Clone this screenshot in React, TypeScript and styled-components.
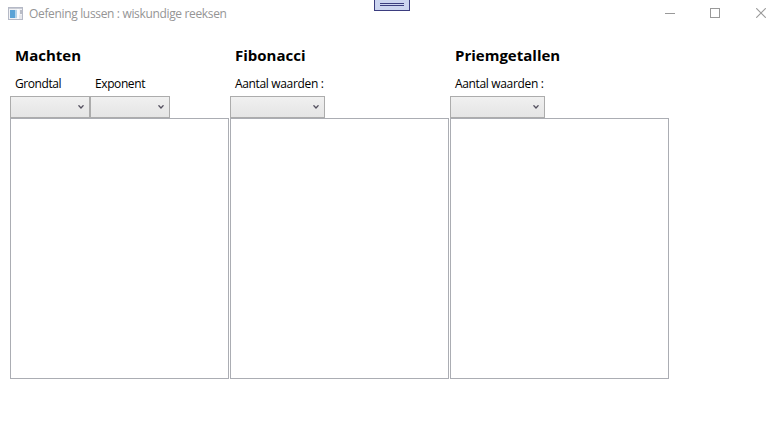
import React from "react";
import styled, { createGlobalStyle } from "styled-components";

const GlobalStyle = createGlobalStyle`
  * { box-sizing: border-box; }
  body {
    margin: 0;
    background: #fff;
    color: #000;
    font-family: "Open Sans", "Noto Sans", sans-serif;
    overflow: hidden;
  }
`;

const Window = styled.div`
  position: relative;
  display: flex;
  flex-direction: column;
  width: 782px;
  height: 437px;
  background: #fff;
`;

const TitleBar = styled.header`
  display: flex;
  align-items: center;
  height: 27px;
  padding-left: 8px;
`;

const AppIcon = styled.svg`
  display: block;
  flex: none;
  margin: 0 6px 1px 0;
`;

const Title = styled.span`
  flex: 1;
  font-size: 12px;
  line-height: 16px;
  letter-spacing: -0.34px;
  color: #959595;
  white-space: nowrap;
`;

const CaptionButton = styled.button<{ $width: number }>`
  display: flex;
  align-items: center;
  justify-content: flex-end;
  width: ${(p) => p.$width}px;
  height: 26px;
  padding: 0;
  border: 0;
  background: none;
`;

const Captions = styled.div`
  display: flex;
  height: 27px;
  padding-right: 16px;
`;

const DebugHandle = styled.div`
  position: absolute;
  top: 0;
  left: 374px;
  display: flex;
  flex-direction: column;
  align-items: center;
  gap: 1px;
  width: 36px;
  height: 11px;
  padding-top: 3px;
  border: 1px solid #3b3d7f;
  border-top: 0;
  background: #ccd5f0;
`;

const Grip = styled.span`
  width: 24px;
  height: 1px;
  background: #3b3d7f;
`;

const Content = styled.main`
  display: flex;
  gap: 1px;
  padding: 18px 0 0 10px;
`;

const Panel = styled.section`
  width: 219px;
`;

const Heading = styled.h2`
  height: 29px;
  margin: 0;
  padding-left: 5px;
  font-size: 15px;
  font-weight: 700;
  line-height: 21px;
`;

const Fields = styled.div`
  display: flex;
`;

const Field = styled.div<{ $width: number }>`
  width: ${(p) => p.$width}px;
`;

const Label = styled.label<{ $spacing: number }>`
  display: block;
  height: 22px;
  padding-left: 5px;
  font-size: 12px;
  line-height: 20px;
  letter-spacing: ${(p) => p.$spacing}px;
  white-space: nowrap;
`;

const Combo = styled.button`
  display: flex;
  align-items: center;
  justify-content: flex-end;
  width: 100%;
  height: 22px;
  padding: 0 5px 0 0;
  border: 1px solid #acacac;
  background: linear-gradient(#f0f0f0, #e5e5e5);
`;

const ListBox = styled.div`
  height: 261px;
  border: 1px solid #abadb3;
  background: #fff;
`;

type FieldSpec = { label: string; width: number; spacing: number };
type PanelSpec = { title: string; fields: FieldSpec[] };

const panels: PanelSpec[] = [
  {
    title: "Machten",
    fields: [
      { label: "Grondtal", width: 80, spacing: -0.42 },
      { label: "Exponent", width: 80, spacing: -0.4 },
    ],
  },
  {
    title: "Fibonacci",
    fields: [{ label: "Aantal waarden :", width: 95, spacing: -0.34 }],
  },
  {
    title: "Priemgetallen",
    fields: [{ label: "Aantal waarden :", width: 95, spacing: -0.34 }],
  },
];

const Chevron = () => (
  <svg width="6" height="4" viewBox="0 0 6 4">
    <path d="M0.5 0.3 L3 3 L5.5 0.3" fill="none" stroke="#54505f" strokeWidth="1.3" />
  </svg>
);

export default function App() {
  return (
    <>
      <GlobalStyle />
      <Window>
        <TitleBar>
          <AppIcon width="15" height="13" viewBox="0 0 15 13">
            <rect x="0.5" y="0.5" width="14" height="12" fill="#f1f2f5" stroke="#b5b9c6" />
            <rect x="1" y="1" width="13" height="1" fill="#c9ccd5" />
            <rect x="2" y="3" width="5" height="8" fill="#5ba3d6" />
            <rect x="7" y="3" width="2" height="8" fill="#b3d3ea" />
            <rect x="9" y="2" width="2" height="10" fill="#fafafc" />
            <rect x="12" y="3" width="2" height="4" fill="#b9bcc6" />
            <rect x="11" y="8" width="3" height="4" fill="#e6e7ec" />
          </AppIcon>
          <Title>Oefening lussen : wiskundige reeksen</Title>
          <Captions>
            <CaptionButton $width={46} aria-label="Minimaliseren">
              <svg width="10" height="10"><path d="M0 5.5H10" stroke="#999" /></svg>
            </CaptionButton>
            <CaptionButton $width={45} aria-label="Maximaliseren">
              <svg width="10" height="10"><rect x="0.5" y="0.5" width="9" height="9" fill="none" stroke="#999" /></svg>
            </CaptionButton>
            <CaptionButton $width={46} aria-label="Sluiten">
              <svg width="10" height="10"><path d="M0.2 0.2L9.8 9.8M9.8 0.2L0.2 9.8" stroke="#999" strokeWidth="1.1" /></svg>
            </CaptionButton>
          </Captions>
        </TitleBar>
        <DebugHandle>
          <Grip />
          <Grip />
        </DebugHandle>
        <Content>
          {panels.map((panel) => (
            <Panel key={panel.title}>
              <Heading>{panel.title}</Heading>
              <Fields>
                {panel.fields.map((field) => (
                  <Field key={field.label} $width={field.width}>
                    <Label $spacing={field.spacing}>{field.label}</Label>
                    <Combo aria-label={field.label}>
                      <Chevron />
                    </Combo>
                  </Field>
                ))}
              </Fields>
              <ListBox />
            </Panel>
          ))}
        </Content>
      </Window>
    </>
  );
}
